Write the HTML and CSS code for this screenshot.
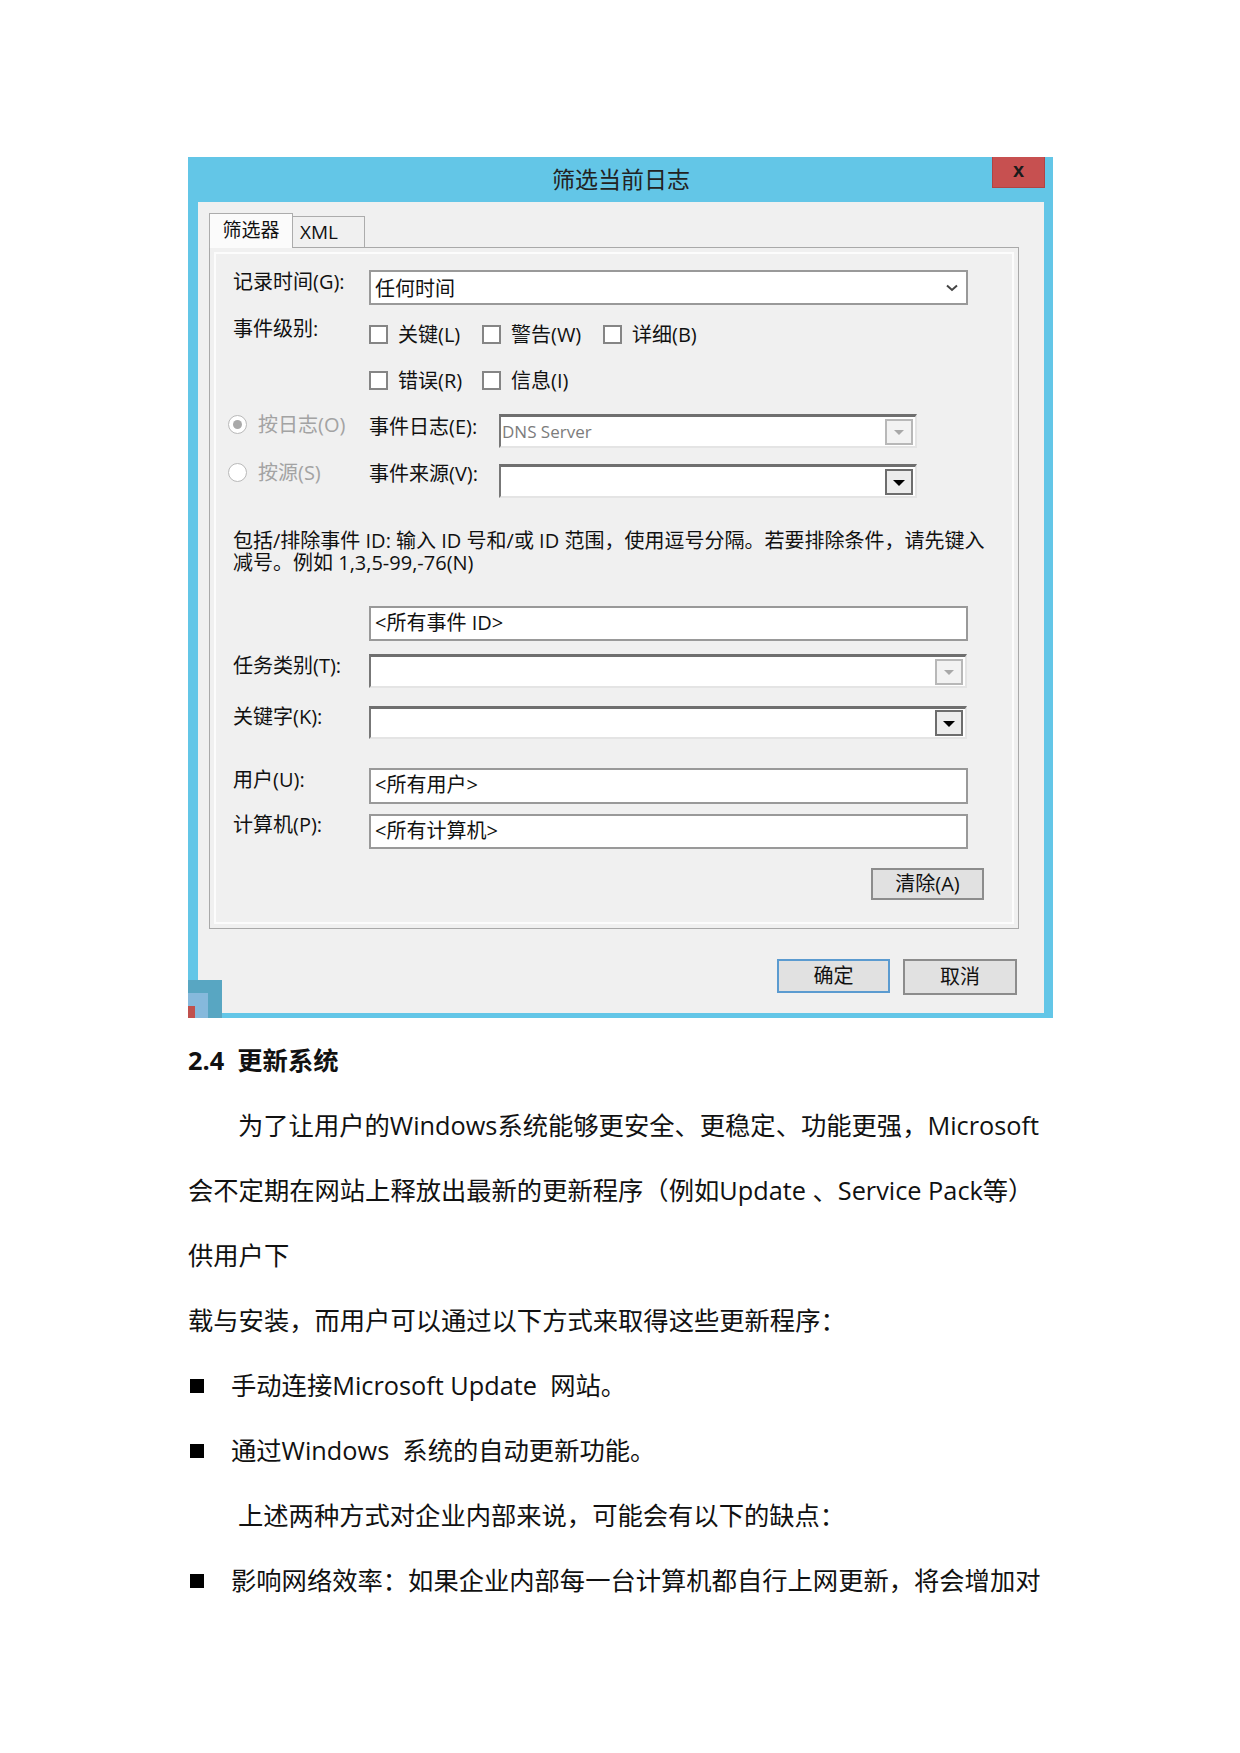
FILE: index.html
```html
<!DOCTYPE html>
<html lang="zh-CN">
<head>
    <meta charset="UTF-8">
    <meta name="viewport" content="width=device-width, initial-scale=1.0">
    <title>筛选当前日志</title>
    <link rel="stylesheet" href="styles.css">
</head>
<body>
    <div class="page">
        <div class="dialog">
            <div class="titlebar">
                <span class="title">筛选当前日志</span>
                <div class="close">x</div>
            </div>
            <div class="client">
                <div class="tabs">
                    <div class="tab active">筛选器</div>
                    <div class="tab">XML</div>
                </div>
                <div class="panel">
                    <!-- 记录时间 -->
                    <div class="row r-time">
                        <div class="label">记录时间(G):</div>
                        <div class="combo flat w-full">
                            <span>任何时间</span>
                            <svg class="chev" width="12" height="8" viewBox="0 0 12 8"><polyline points="1,1.5 6,6 11,1.5" fill="none" stroke="#444" stroke-width="2"/></svg>
                        </div>
                    </div>
                    <!-- 事件级别 -->
                    <div class="row checks first">
                        <div class="label">事件级别:</div>
                        <div class="check c1"><span class="box"></span>关键(L)</div>
                        <div class="check c2"><span class="box"></span>警告(W)</div>
                        <div class="check"><span class="box"></span>详细(B)</div>
                    </div>
                    <div class="row checks second">
                        <div class="label"></div>
                        <div class="check c1"><span class="box"></span>错误(R)</div>
                        <div class="check c2"><span class="box"></span>信息(I)</div>
                    </div>
                    <!-- 按日志 / 按源 -->
                    <div class="row r-log">
                        <div class="radio"><span class="dot checked"></span>按日志(O)</div>
                        <div class="label short">事件日志(E):</div>
                        <div class="combo sunken w-mid">
                            <span class="muted">DNS Server</span>
                            <span class="drop off"><i></i></span>
                        </div>
                    </div>
                    <div class="row r-src">
                        <div class="radio"><span class="dot"></span>按源(S)</div>
                        <div class="label short">事件来源(V):</div>
                        <div class="combo sunken w-mid">
                            <span></span>
                            <span class="drop"><i></i></span>
                        </div>
                    </div>
                    <p class="desc">包括/排除事件 ID: 输入 ID 号和/或 ID 范围，使用逗号分隔。若要排除条件，请先键入<br>减号。例如 1,3,5-99,-76(N)</p>
                    <div class="row r-id">
                        <div class="label"></div>
                        <div class="field">&lt;所有事件 ID&gt;</div>
                    </div>
                    <div class="row r-task">
                        <div class="label">任务类别(T):</div>
                        <div class="combo sunken w-wide">
                            <span></span>
                            <span class="drop off"><i></i></span>
                        </div>
                    </div>
                    <div class="row r-key">
                        <div class="label">关键字(K):</div>
                        <div class="combo sunken w-wide">
                            <span></span>
                            <span class="drop"><i></i></span>
                        </div>
                    </div>
                    <div class="row r-user">
                        <div class="label">用户(U):</div>
                        <div class="field">&lt;所有用户&gt;</div>
                    </div>
                    <div class="row r-pc">
                        <div class="label">计算机(P):</div>
                        <div class="field">&lt;所有计算机&gt;</div>
                    </div>
                    <div class="btn clear">清除(A)</div>
                </div>
                <div class="actions">
                    <div class="btn ok">确定</div>
                    <div class="btn">取消</div>
                </div>
            </div>
            <div class="corner"><span class="c-in"></span><span class="c-red"></span></div>
        </div>

        <div class="doc">
            <p class="h">2.4&nbsp;&nbsp;更新系统</p>
            <p class="indent">为了让用户的Windows系统能够更安全、更稳定、功能更强，Microsoft</p>
            <p>会不定期在网站上释放出最新的更新程序（例如Update 、Service Pack等）</p>
            <p>供用户下</p>
            <p>载与安装，而用户可以通过以下方式来取得这些更新程序：</p>
            <p class="li"><span class="sq"></span>手动连接Microsoft Update&nbsp; 网站。</p>
            <p class="li"><span class="sq"></span>通过Windows&nbsp; 系统的自动更新功能。</p>
            <p class="indent">上述两种方式对企业内部来说，可能会有以下的缺点：</p>
            <p class="li"><span class="sq"></span>影响网络效率：如果企业内部每一台计算机都自行上网更新，将会增加对</p>
        </div>
    </div>
</body>
</html>
```

FILE: styles.css
```css
*{
    box-sizing: border-box;
}
body{
    margin: 0;
    background: #fff;
    font-family: "Open Sans", "Noto Sans CJK SC", sans-serif;
    color: #111;
}
.page{
    width: 1240px;
    padding: 157px 0 40px 188px;
}

/* 对话框外框 */
.dialog{
    position: relative;
    width: 865px;
    height: 861px;
    background: #63c6e7;
    padding: 0 9px 5px 10px;
}
.titlebar{
    position: relative;
    height: 45px;
    padding-bottom: 3px;
    display: flex;
    align-items: center;
    justify-content: center;
}
.title{
    font-family: "Noto Sans CJK SC", sans-serif;
    font-size: 23px;
    color: #222;
}
.close{
    position: absolute;
    top: 0;
    right: -1px;
    width: 53px;
    height: 31px;
    background: #c75050;
    border: 1px solid #b04444;
    border-top: none;
    display: flex;
    align-items: center;
    justify-content: center;
    font: bold 20px "Liberation Sans", sans-serif;
    color: #1b1b1b;
    padding-bottom: 4px;
}
.client{
    height: 811px;
    background: #f0f0f0;
    padding: 11px 0 0 11px;
}

/* 选项卡 */
.tabs{
    display: flex;
    align-items: flex-end;
    height: 34px;
    position: relative;
    z-index: 1;
}
.tab{
    height: 31px;
    width: 72px;
    padding-left: 7px;
    border: 1px solid #acacac;
    border-left: none;
    border-bottom: none;
    background: #f0f0f0;
    font-size: 19px;
    line-height: 30px;
}
.tab.active{
    width: 84px;
    height: 35px;
    padding-left: 0;
    margin-bottom: -1px;
    border-left: 1px solid #acacac;
    background: #fbfbfb;
    text-align: center;
    line-height: 33px;
}
.panel{
    width: 810px;
    height: 682px;
    border: 1px solid #a9a9a9;
    background: #f0f0f0;
    box-shadow: inset 0 0 0 4px #f0f0f0, inset 0 0 0 6px #fcfcfc;
    padding: 22px 0 0 23px;
    font-size: 20px;
}

/* 行：高度固定，标签单独对齐 */
.row{
    display: flex;
    align-items: flex-start;
}
.label{
    width: 136px;
    flex: none;
    height: 24px;
    line-height: 24px;
    white-space: nowrap;
}
.label.short{
    width: 130px;
}
.combo{
    height: 34px;
    background: #fff;
    display: flex;
    align-items: center;
    justify-content: space-between;
}
.combo.flat{
    height: 35px;
    border: 2px solid #999;
    padding: 0 8px 0 4px;
}
.combo.sunken{
    border-top: 3px solid #6f6f6f;
    border-left: 2px solid #777;
    border-right: 2px solid #e4e4e4;
    border-bottom: 2px solid #e4e4e4;
    padding: 0 2px 0 1px;
}
.w-full{
    width: 599px;
}
.w-mid{
    width: 418px;
}
.w-wide{
    width: 598px;
}
.chev{
    display: block;
}
.muted{
    color: #7c7c7c;
    font-size: 17px;
}
.drop{
    width: 28px;
    height: 26px;
    border: 2px solid #6d6d6d;
    background: #ececec;
    display: flex;
    align-items: center;
    justify-content: center;
}
.drop i{
    width: 0;
    height: 0;
    border-left: 6px solid transparent;
    border-right: 6px solid transparent;
    border-top: 6px solid #000;
    margin-top: 2px;
}
.drop.off{
    border-color: #b8b8b8;
    background: #f2f2f2;
}
.drop.off i{
    border-left-width: 5px;
    border-right-width: 5px;
    border-top: 5px solid #a8a8a8;
}

.r-time{
    height: 35px;
}

/* 复选框 */
.checks{
    height: 19px;
}
.checks.first{
    margin-top: 20px;
}
.checks.first .label{
    margin-top: -8px;
}
.checks.second{
    margin-top: 27px;
}
.check{
    display: flex;
    align-items: center;
    height: 19px;
    line-height: 19px;
    white-space: nowrap;
}
.check.c1{
    width: 113px;
}
.check.c2{
    width: 121px;
}
.box{
    width: 19px;
    height: 19px;
    border: 2px solid #858585;
    background: #fff;
    margin-right: 10px;
    flex: none;
}

/* 单选 */
.radio{
    width: 141px;
    height: 19px;
    line-height: 19px;
    margin: 1px 0 0 -5px;
    display: flex;
    align-items: center;
    color: #a3a3a3;
    white-space: nowrap;
}
.dot{
    width: 19px;
    height: 19px;
    border: 1px solid #b9b9b9;
    border-radius: 50%;
    background: #fff;
    margin-right: 11px;
    display: flex;
    align-items: center;
    justify-content: center;
    flex: none;
}
.dot.checked::after{
    content: "";
    width: 9px;
    height: 9px;
    border-radius: 50%;
    background: #a9a9a9;
}
.r-log{
    height: 34px;
    margin-top: 24px;
}
.r-log .label{
    margin-top: 1px;
}
.r-src{
    height: 34px;
    margin-top: 16px;
}
.r-src .radio{
    margin-top: -1px;
}
.r-src .label{
    margin-top: -2px;
}
.desc{
    margin: 32px 0 0;
    height: 44px;
    line-height: 22px;
    white-space: nowrap;
}
.field{
    width: 599px;
    height: 35px;
    border: 2px solid #999;
    background: #fff;
    padding-left: 4px;
    line-height: 30px;
}
.r-id{
    height: 35px;
    margin-top: 32px;
}
.r-task{
    height: 34px;
    margin-top: 13px;
}
.r-task .label{
    margin-top: 0;
}
.r-key{
    height: 33px;
    margin-top: 18px;
}
.r-key .combo{
    height: 33px;
}
.r-key .label{
    margin-top: -1px;
}
.r-user{
    height: 36px;
    margin-top: 29px;
}
.r-user .field{
    height: 36px;
}
.r-user .label{
    margin-top: 0;
}
.r-pc .label{
    margin-top: -1px;
}
.r-pc{
    height: 35px;
    margin-top: 10px;
}

/* 按钮 */
.btn{
    width: 114px;
    height: 36px;
    border: 2px solid #8c8c8c;
    background: #e1e1e1;
    text-align: center;
    line-height: 31px;
    font-size: 20px;
}
.btn.clear{
    width: 113px;
    height: 32px;
    line-height: 27px;
    margin: 19px 0 0 638px;
}
.btn.ok{
    width: 113px;
    height: 34px;
    line-height: 29px;
    border-color: #5b9bd0;
}
.actions{
    display: flex;
    justify-content: flex-end;
    gap: 13px;
    margin-top: 30px;
    padding-right: 27px;
}

/* 左下角残留的窗口 */
.corner{
    position: absolute;
    left: 0;
    bottom: 0;
    width: 34px;
    height: 38px;
    background: #58a6c2;
}
.c-in{
    position: absolute;
    left: 0;
    bottom: 0;
    width: 20px;
    height: 25px;
    background: #86b9dc;
}
.c-red{
    position: absolute;
    left: 0;
    bottom: 0;
    width: 7px;
    height: 12px;
    background: #c0504d;
}

/* 正文 */
.doc{
    margin-top: 10px;
    font-size: 25.3px;
    color: #111;
}
.doc p{
    margin: 0;
    height: 65px;
    line-height: 65px;
    white-space: nowrap;
}
.doc .h{
    font-weight: bold;
}
.doc .indent{
    padding-left: 50px;
}
.doc .li{
    display: flex;
    align-items: center;
}
.sq{
    width: 14px;
    height: 14px;
    background: #000;
    margin: 0 27px 0 2px;
    flex: none;
}
```
